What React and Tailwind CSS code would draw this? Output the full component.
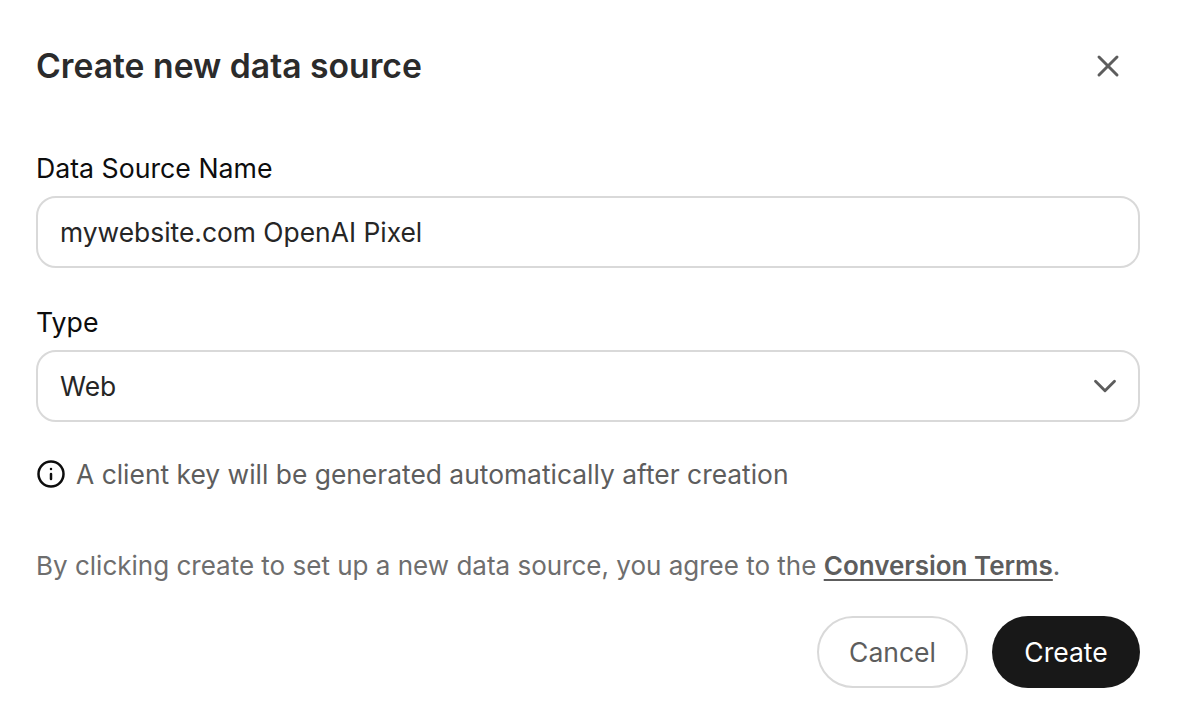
import { ChevronDown, Info, X } from "lucide-react";

function Field({ label, children }) {
  return (
    <div className="flex flex-col gap-[19px]">
      <div className="h-[18px] flex items-center text-[26.7px] text-[#0d0d0d]">{label}</div>
      {children}
    </div>
  );
}

export default function App() {
  return (
    <div
      className="w-[1182px] h-[726px] bg-white overflow-hidden pl-[36px] pr-[42px] pt-[46px]"
      style={{ fontFamily: "Inter, 'Liberation Sans', sans-serif" }}>
      {/* Header */}
      <div className="flex items-center justify-between h-[40px]">
        <h2 className="text-[33.7px] font-semibold text-[#2b2b2b]">Create new data source</h2>
        <button className="mr-[14px] text-[#5d5d5d]">
          <X size={36} strokeWidth={2} />
        </button>
      </div>

      <div className="flex flex-col gap-[45px] mt-[73px]">
        <Field label="Data Source Name">
          <div className="h-[72px] flex items-center pt-[2px] px-[22px] border-2 border-[#d9d9d9] rounded-[20px] text-[26.4px] text-[#262626]">
            mywebsite.com OpenAI Pixel
          </div>
        </Field>

        <Field label="Type">
          <div className="h-[72px] flex items-center justify-between pl-[22px] pr-[14px] border-2 border-[#d9d9d9] rounded-[20px] text-[26.4px] text-[#262626]">
            <span className="pt-[2px]">Web</span>
            <ChevronDown size={38} strokeWidth={1.8} className="text-[#5d5d5d]" />
          </div>
        </Field>
      </div>

      <div className="flex items-center gap-[10px] mt-[37px] h-[30px] text-[26.4px] text-[#5d5d5d]">
        <Info size={30} strokeWidth={2} className="text-[#0d0d0d]" />
        <span className="pt-[2px]">A client key will be generated automatically after creation</span>
      </div>

      <p className="mt-[61px] h-[30px] flex items-center text-[26px] text-[#6e6e6e] whitespace-pre">
        By clicking create to set up a new data source, you agree to the{" "}
        <a className="font-semibold text-[#5d5d5d] underline underline-offset-4">Conversion Terms</a>.
      </p>

      {/* Actions */}
      <div className="flex justify-end gap-[24px] mt-[36px]">
        <button className="w-[151px] h-[72px] pt-[2px] rounded-full border-2 border-[#d9d9d9] text-[26.5px] text-[#5d5d5d]">
          Cancel
        </button>
        <button className="w-[148px] h-[72px] pt-[2px] rounded-full bg-[#181818] text-[26.5px] text-white">
          Create
        </button>
      </div>
    </div>
  );
}
